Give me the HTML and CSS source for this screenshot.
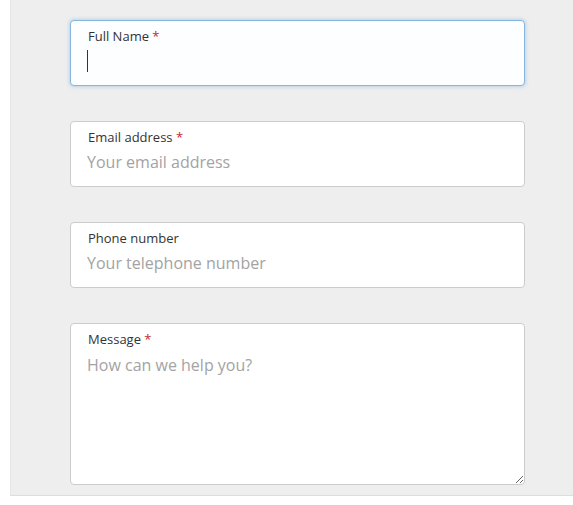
FILE: index.html
```html
<!DOCTYPE html>
<html lang="en">
<head>
    <meta charset="UTF-8">
    <meta name="viewport" content="width=device-width, initial-scale=1.0">
    <title>Contact</title>
    <link rel="stylesheet" href="styles.css">
</head>
<body>
    <div class="page">
        <form class="contact-form">
            <div class="field focused">
                <label for="name">Full Name <span class="req">*</span></label>
                <input type="text" id="name">
            </div>
            <div class="field">
                <label for="email">Email address <span class="req">*</span></label>
                <input type="email" id="email" placeholder="Your email address">
            </div>
            <div class="field">
                <label for="phone">Phone number</label>
                <input type="tel" id="phone" placeholder="Your telephone number">
            </div>
            <div class="field">
                <label for="message">Message <span class="req">*</span></label>
                <textarea id="message" placeholder="How can we help you?"></textarea>
            </div>
        </form>
    </div>
</body>
</html>
```

FILE: styles.css
```css
* {
    margin: 0;
    padding: 0;
    box-sizing: border-box;
}

body {
    font-family: 'Open Sans', sans-serif;
    background-color: #fff;
    color: #333;
}

.page {
    margin-left: 10px;
    height: 496px;
    background-color: #eeeeee;
    border-left: 1px solid #e6e6e6;
    border-bottom: 1px solid #dddddd;
    padding: 20px 0 0 59px;
}

.contact-form {
    width: 455px;
    display: flex;
    flex-direction: column;
    gap: 35px;
}

.field {
    position: relative;
}

.field label {
    position: absolute;
    top: 9px;
    left: 18px;
    font-size: 13px;
    line-height: 15px;
    color: #333;
}

.field .req {
    color: #c0282d;
}

.field input,
.field textarea {
    display: block;
    width: 100%;
    height: 66px;
    padding: 30px 16px 14px;
    font-family: inherit;
    font-size: 16px;
    line-height: 20px;
    color: #333;
    background-color: #fff;
    border: 1px solid #cccccc;
    border-radius: 4px;
    outline: none;
}

.field textarea {
    height: 162px;
    padding-top: 31px;
    resize: vertical;
}

.field input::placeholder,
.field textarea::placeholder {
    color: #a3a3a3;
}

/* focused look for the first field */
.field.focused input {
    border-color: #86b5e0;
    background-color: #fcfeff;
    box-shadow: 0 0 4px rgba(102, 160, 220, 0.55);
}

.field.focused::after {
    content: "";
    position: absolute;
    top: 30px;
    left: 17px;
    width: 1px;
    height: 22px;
    background-color: #333;
}
```
